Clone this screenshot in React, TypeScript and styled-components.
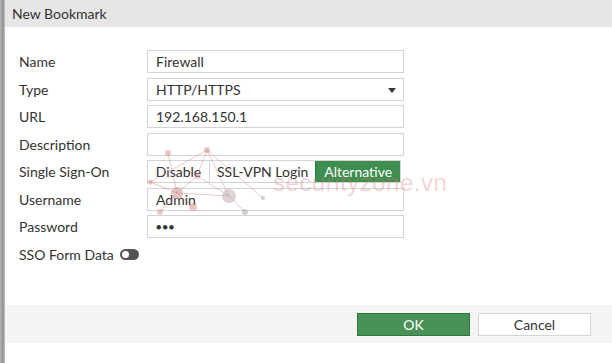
import React from 'react'
import styled, { createGlobalStyle } from 'styled-components'

const GlobalStyle = createGlobalStyle`
  html, body {
    margin: 0;
    padding: 0;
    background: #9c9c9c;
  }
  body {
    font-family: Lato, "Open Sans", Arial, sans-serif;
    font-size: 14px;
    color: #333;
  }
`

const Page = styled.div`
  display: flex;
  width: 612px;
  height: 363px;
  overflow: hidden;
`

const EdgeStrip = styled.div`
  width: 5px;
  background: linear-gradient(to right, #b8b8b8, #8e8e8e 60%, #c9c9c9);
`

const Dialog = styled.div`
  position: relative;
  flex: 1;
  display: flex;
  flex-direction: column;
  background: #fff;
`

const Header = styled.div`
  height: 27px;
  background: #e6e6e6;
  display: flex;
  align-items: center;
  padding-left: 7px;
  color: #333;
`

const Body = styled.div`
  flex: 0 0 278px;
  padding: 23px 0 0 14px;
  box-sizing: border-box;
  display: flex;
  flex-direction: column;
  gap: 4.5px;
`

const Row = styled.div`
  display: grid;
  grid-template-columns: 128px 257px;
  align-items: center;
  height: 23px;
`

const Label = styled.span`
  color: #333;
  white-space: nowrap;
`

const Field = styled.div`
  position: relative;
  height: 23px;
  border: 1px solid #d4d4d4;
  box-sizing: border-box;
  display: flex;
  align-items: center;
  padding: 0 8px;
  color: #333;
  background: #fff;
`

const Caret = styled.span`
  position: absolute;
  right: 7px;
  top: 9px;
  width: 0;
  height: 0;
  border-left: 4px solid transparent;
  border-right: 4px solid transparent;
  border-top: 5px solid #333;
`

const Dots = styled.span`
  letter-spacing: 1px;
  font-size: 9px;
`

const Segments = styled.div`
  display: flex;
  height: 23px;
  width: 254px;
  border: 1px solid #d4d4d4;
  box-sizing: border-box;
`

const Segment = styled.div<{ $active?: boolean; $w: number }>`
  width: ${p => p.$w}px;
  display: flex;
  align-items: center;
  justify-content: center;
  background: ${p => (p.$active ? '#3e8e4f' : '#fff')};
  color: ${p => (p.$active ? '#fff' : '#333')};
  border-left: 1px solid ${p => (p.$active ? '#2f7a3e' : '#d4d4d4')};
  &:first-child {
    border-left: none;
  }
`

const ToggleRow = styled.div`
  display: flex;
  align-items: center;
  gap: 6px;
  height: 23px;
`

const Toggle = styled.span`
  position: relative;
  width: 19px;
  height: 11px;
  border-radius: 6px;
  background: #555;
  &::after {
    content: '';
    position: absolute;
    left: 2px;
    top: 2px;
    width: 7px;
    height: 7px;
    border-radius: 50%;
    background: #fff;
  }
`

const Footer = styled.div`
  height: 38px;
  background: #f4f4f4;
  display: flex;
  align-items: center;
  justify-content: flex-end;
  gap: 8px;
  padding-right: 21px;
`

const Button = styled.button<{ $primary?: boolean }>`
  width: 113px;
  height: 23px;
  font-family: inherit;
  font-size: 14px;
  border: 1px solid ${p => (p.$primary ? '#2c7a3b' : '#d4d4d4')};
  background: ${p => (p.$primary ? '#4a9159' : '#fff')};
  color: ${p => (p.$primary ? '#fff' : '#333')};
  padding: 0;
`

const Watermark = styled.div`
  position: absolute;
  left: 0;
  top: 0;
  width: 100%;
  height: 100%;
  pointer-events: none;
`

const WatermarkText = styled.span`
  position: absolute;
  left: 268px;
  top: 171px;
  font-family: "Liberation Sans", Arial, sans-serif;
  font-size: 24px;
  line-height: 1;
  letter-spacing: 0.5px;
  color: rgba(214, 120, 120, 0.33);
  white-space: nowrap;
`

// node coordinates are relative to the dialog (page x minus 5)
const nodes: [number, number, number, string][] = [
  [202, 150, 3, 'rgba(205,130,130,0.45)'],
  [163, 153, 3, 'rgba(215,120,120,0.4)'],
  [145, 182, 2.5, 'rgba(215,120,120,0.4)'],
  [172, 193, 6, 'rgba(205,130,130,0.45)'],
  [192, 176, 3, 'rgba(205,130,130,0.4)'],
  [224, 196, 7, 'rgba(185,160,160,0.45)'],
  [240, 212, 3, 'rgba(170,170,170,0.55)'],
  [258, 198, 2, 'rgba(170,170,170,0.55)'],
  [155, 212, 3, 'rgba(215,120,120,0.4)'],
  [188, 207, 4, 'rgba(215,120,120,0.4)'],
]

const edges: [number, number][] = [
  [0, 2], [0, 4], [0, 5], [0, 7], [1, 3], [2, 3], [3, 5], [4, 5], [5, 6], [3, 8], [3, 9], [4, 3],
]

function Network() {
  return (
    <svg width="607" height="336" viewBox="0 0 607 336" style={{ position: 'absolute', left: 0, top: 0 }}>
      {edges.map(([a, b], i) => (
        <line
          key={i}
          x1={nodes[a][0]}
          y1={nodes[a][1]}
          x2={nodes[b][0]}
          y2={nodes[b][1]}
          stroke="rgba(200,125,125,0.4)"
          strokeWidth="1"
        />
      ))}
      {nodes.map((n, i) => (
        <circle key={i} cx={n[0]} cy={n[1]} r={n[2]} fill={n[3]} />
      ))}
    </svg>
  )
}

export default function App() {
  return (
    <Page>
      <GlobalStyle />
      <EdgeStrip />
      <Dialog>
        <Header>New Bookmark</Header>
        <Body>
          <Row>
            <Label>Name</Label>
            <Field>Firewall</Field>
          </Row>
          <Row>
            <Label>Type</Label>
            <Field>
              HTTP/HTTPS
              <Caret />
            </Field>
          </Row>
          <Row>
            <Label>URL</Label>
            <Field>192.168.150.1</Field>
          </Row>
          <Row>
            <Label>Description</Label>
            <Field />
          </Row>
          <Row>
            <Label>Single Sign-On</Label>
            <Segments>
              <Segment $w={62}>Disable</Segment>
              <Segment $w={107}>SSL-VPN Login</Segment>
              <Segment $w={85} $active>
                Alternative
              </Segment>
            </Segments>
          </Row>
          <Row>
            <Label>Username</Label>
            <Field>Admin</Field>
          </Row>
          <Row>
            <Label>Password</Label>
            <Field>
              <Dots>●●●</Dots>
            </Field>
          </Row>
          <ToggleRow>
            <Label>SSO Form Data</Label>
            <Toggle />
          </ToggleRow>
        </Body>
        <Footer>
          <Button $primary>OK</Button>
          <Button>Cancel</Button>
        </Footer>
        <Watermark>
          <Network />
          <WatermarkText>securityzone.vn</WatermarkText>
        </Watermark>
      </Dialog>
    </Page>
  )
}
